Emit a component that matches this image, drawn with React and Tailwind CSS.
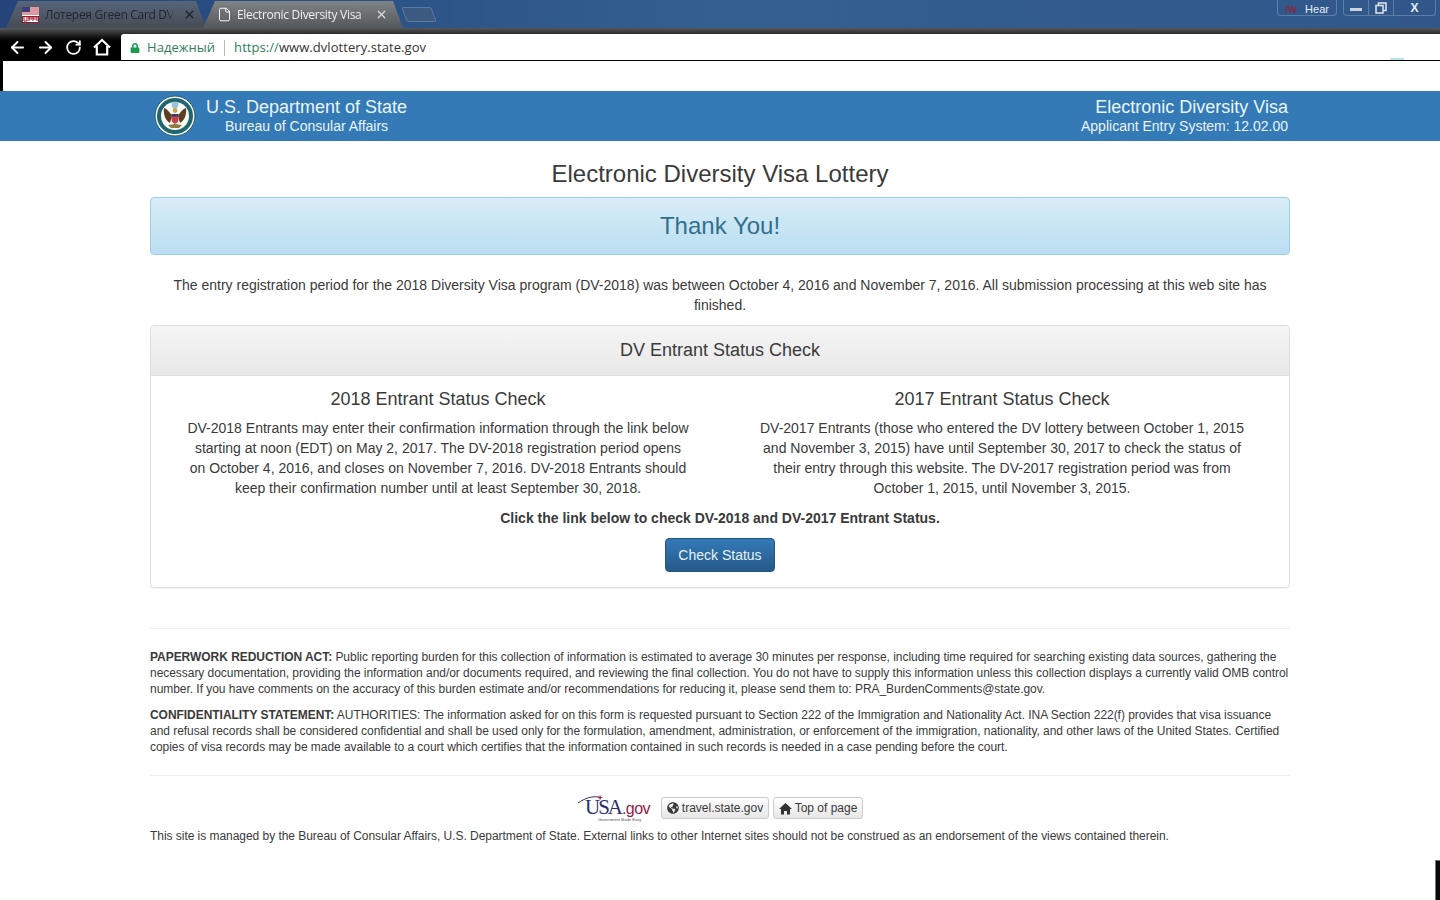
import { ArrowLeft, ArrowRight, RotateCw, File, X } from "lucide-react";
import { FaGlobeAmericas, FaLock } from "react-icons/fa";

const FlagIcon = () => (
  <svg width="17" height="16" viewBox="0 0 17 16" className="shrink-0">
    <rect width="17" height="9" fill="#fff" />
    <path d="M0 1h17M0 3h17M0 5h17M0 7h17" stroke="#c03040" strokeWidth="1" />
    <rect width="8" height="5" fill="#3a3f78" />
    <rect y="9" width="17" height="7" fill="#a01828" />
    <rect x="1" y="10" width="15" height="5" fill="#fff" />
    <path d="M2 10v4h3v-4M7 10v2h3v-2H7v4M11 10h4v4M11 12h4M11 10v4" fill="none" stroke="#a01828" strokeWidth="1" />
  </svg>
);

// the department seal, drawn small
const Seal = () => (
  <svg width="42" height="42" viewBox="0 0 42 42" className="shrink-0">
    <circle cx="21" cy="21" r="20" fill="#f4f6f4" stroke="#2d5f6a" strokeWidth="1" />
    <circle cx="21" cy="21" r="18" fill="#1f6670" />
    <circle cx="21" cy="21" r="14" fill="#fafaf5" />
    <circle cx="21" cy="10" r="3.4" fill="#9cc4d8" />
    <path d="M10 13c3 1 6 4 8 8l-2 7c-4-2-7-8-6-15zM32 13c-3 1-6 4-8 8l2 7c4-2 7-8 6-15z" fill="#5c3f22" />
    <circle cx="21" cy="15.5" r="2.4" fill="#c9a24a" />
    <path d="M17.5 19h7v6c0 2-2 3-3.500 4-1.500-1-3.500-2-3.500-4z" fill="#c8404a" />
    <path d="M17.500 19h7v2.500h-7z" fill="#33406e" />
    <path d="M14 30l7-1 7 1-3 3h-8z" fill="#8d7a3c" />
  </svg>
);

const OutlineHome = () => (
  <svg width="18" height="18" viewBox="0 0 18 18" fill="none" stroke="white" strokeWidth="2.200" className="ml-[2px]">
    <path d="M1 9.500 9 2l8 7.500" />
    <path d="M3.800 8v8.500h10.400V8" />
  </svg>
);

const SolidHome = () => (
  <svg width="13" height="13" viewBox="0 0 13 13" fill="#333" className="shrink-0">
    <path d="M6.500 1 13 7h-2v5.500H8V9H5v3.500H2V7H0z" />
  </svg>
);

const ChromeTab = ({ active, icon, title, className, closeColor }) => (
  <div
    className={`flex items-center h-[27px] w-[200px] -mr-[3px] text-[12px] tracking-[-0.3px] [clip-path:polygon(0_100%,6%_0,95%_0,100%_100%)] ${className} ${
      active ? "bg-gradient-to-b from-[#7f8487] to-[#55585b] text-[#eef0f1]" : "bg-gradient-to-b from-[#56657a] to-[#474c55] text-[#1f2430]"
    }`}
  >
    {icon}
    <span className="w-[130px] overflow-hidden whitespace-nowrap [mask-image:linear-gradient(to_right,black_94%,transparent)]">
      {title}
    </span>
    <X size={13} strokeWidth={2.500} className={`ml-auto ${closeColor}`} />
  </div>
);

const WinButton = ({ children, className }) => (
  <div className={`h-[16px] flex items-center justify-center border border-t-0 border-[#5b7fa8] text-[#e6edf5] ${className}`}>
    {children}
  </div>
);

const BrowserBar = () => (
  <div className="font-['Open_Sans',sans-serif]">
    {/* tab strip */}
    <div className="h-[28px] flex items-end pl-[6px] bg-gradient-to-r from-[#24447a] via-[#34608f] to-[#31578a]">
      <ChromeTab
        icon={<span className="mr-[6px]"><FlagIcon /></span>}
        title="Лотерея Green Card DV"
        className="pl-[16px] pr-[10px]"
        closeColor="text-[#20242c]"
      />
      <ChromeTab
        active
        icon={<File size={15} strokeWidth={1.500} className="shrink-0 text-white mr-[5px]" />}
        title="Electronic Diversity Visa"
        className="pl-[14px] pr-[15px]"
        closeColor="text-[#d8dadb]"
      />
      <div className="h-[15px] w-[30px] ml-[4px] mb-[6px] bg-[#3d5a80] border border-[#587ba3] rounded-[2px] [transform:skewX(20deg)]" />
      <div className="ml-auto flex self-start mr-[4px]">
        <WinButton className="w-[60px] rounded-b-[4px] mr-[6px] pt-[3px] text-[11px] font-['Liberation_Sans',sans-serif] gap-[8px]">
          <svg width="12" height="11" viewBox="0 0 12 11" fill="none" stroke="#7c3048" strokeWidth="1.500">
            <path d="M1 9c0-4 1-7 2-7s1 6 2 6 1-6 2-6 1 7 2 7 1-4 2-6" />
          </svg>
          Hear
        </WinButton>
        <WinButton className="w-[26px] rounded-bl-[4px]">
          <div className="w-[12px] h-[3px] bg-[#c9d3de] mt-[4px]" />
        </WinButton>
        <WinButton className="w-[25px] border-l-0">
          <svg width="12" height="12" viewBox="0 0 12 12" fill="none" stroke="#dfe6ee" strokeWidth="1.500">
            <rect x="1" y="3.500" width="7" height="7.500" />
            <path d="M3.500 3V1H11v7.500H8.500" />
          </svg>
        </WinButton>
        <WinButton className="w-[42px] border-l-0 rounded-br-[4px] text-[12px] font-bold font-['Liberation_Sans',sans-serif]">
          X
        </WinButton>
      </div>
    </div>

    {/* toolbar */}
    <div className="h-[33px] flex items-stretch bg-gradient-to-b from-[#585858] via-[#000] to-[#000] border-b border-black">
      <div className="w-[121px] shrink-0 flex items-center pl-[8px] gap-[9px] text-white pt-[6px]">
        <ArrowLeft size={19} strokeWidth={2.500} />
        <ArrowRight size={19} strokeWidth={2.500} />
        <RotateCw size={17} strokeWidth={2.500} className="ml-[1px]" />
        <OutlineHome />
      </div>
      <div className="flex-1 mt-[6px] pt-[1px] bg-white rounded-tl-[3px] flex items-center text-[13px] tracking-[0.06px] pl-[9px]">
        <FaLock size={10} className="text-[#1a9a50]" />
        <span className="ml-[7px] text-[#2f7d5b]">Надежный</span>
        <span className="mx-[9px] h-[16px] w-px bg-[#bbbbbb]" />
        <span className="text-[#2f7d5b]">https://</span>
        <span className="text-[#333]">www.dvlottery.state.gov</span>
      </div>
    </div>

    {/* leftover strip from the browser */}
    <div className="h-[30px] bg-white border-l-[3px] border-black" />
  </div>
);

const SiteHeader = () => (
  <div className="h-[50px] bg-[#337ab7] text-[#eaf5fb]">
    <div className="w-[1140px] mx-auto pl-[4px] pr-[2px] flex items-center justify-between h-full">
      <div className="flex items-center">
        <Seal />
        <div className="ml-[10px] text-center">
          <div className="text-[18px] leading-[20px]">U.S. Department of State</div>
          <div className="text-[14px] leading-[18px]">Bureau of Consular Affairs</div>
        </div>
      </div>
      <div className="text-right">
        <div className="text-[18px] leading-[20px]">Electronic Diversity Visa</div>
        <div className="text-[14px] leading-[18px]">Applicant Entry System: 12.02.00</div>
      </div>
    </div>
  </div>
);

const StatusColumn = ({ title, children }) => (
  <div className="w-[504px] text-center">
    <h3 className="text-[18px] leading-[20px] mb-[9px]">{title}</h3>
    <p className="text-[14px] leading-[20px]">{children}</p>
  </div>
);

const StatusPanel = () => (
  <div className="mt-[10px] border border-[#dddddd] rounded-[4px] shadow-[0_1px_1px_rgba(0,0,0,0.05)]">
    <div className="h-[50px] flex items-center justify-center text-[18px] border-b border-[#dddddd] bg-gradient-to-b from-[#f5f5f5] to-[#e8e8e8] rounded-t-[3px]">
      DV Entrant Status Check
    </div>
    <div className="pt-[13px] pb-[15px]">
      <div className="flex gap-[60px] px-[35px]">
        <StatusColumn title="2018 Entrant Status Check">
          DV-2018 Entrants may enter their confirmation information through the link below starting at noon (EDT) on May
          2, 2017. The DV-2018 registration period opens on October 4, 2016, and closes on November 7, 2016. DV-2018
          Entrants should keep their confirmation number until at least September 30, 2018.
        </StatusColumn>
        <StatusColumn title="2017 Entrant Status Check">
          DV-2017 Entrants (those who entered the DV lottery between October 1, 2015 and November 3, 2015) have until
          September 30, 2017 to check the status of their entry through this website. The DV-2017 registration period
          was from October 1, 2015, until November 3, 2015.
        </StatusColumn>
      </div>
      <p className="mt-[10px] text-center font-bold text-[14px] leading-[20px]">
        Click the link below to check DV-2018 and DV-2017 Entrant Status.
      </p>
      <div className="mt-[10px] flex justify-center">
        <button className="w-[110px] h-[34px] text-[14px] text-[#e6f2fa] rounded-[4px] border border-[#245580] bg-gradient-to-b from-[#337ab7] to-[#265a88]">
          Check Status
        </button>
      </div>
    </div>
  </div>
);

const UsaGovLogo = () => (
  <div className="relative w-[80px] h-[24px] pl-[8px] whitespace-nowrap leading-[22px] font-['Liberation_Serif',serif] text-[21px] tracking-[-2px] text-[#2b2f6b]">
    USA
    <span className="ml-[1px] font-['Liberation_Sans',sans-serif] text-[16px] tracking-[-0.600px] text-[#8f2347]">.gov</span>
    {/* swoosh and star over the U */}
    <svg width="30" height="12" viewBox="0 0 30 12" className="absolute left-0 -top-[2px]" fill="none">
      <path d="M1 9C8 4 15 2 22 3" stroke="#2b2f6b" strokeWidth="1" />
      <path d="M23 1l1 2 2 .5-2 .8-1 2-.8-2-2-.8 2-.5z" fill="#b02048" />
    </svg>
    <span className="absolute left-[21px] top-[22px] text-[4px] leading-[4px] tracking-normal font-['Liberation_Sans',sans-serif] text-[#555]">
      Government Made Easy
    </span>
  </div>
);

const Footer = () => (
  <>
    <div className="mt-[40px] border-t border-[#eeeeee] pt-[20px] text-[12px] leading-[16px] tracking-[-0.042px]">
      <p>
        <b>PAPERWORK REDUCTION ACT:</b> Public reporting burden for this collection of information is estimated to
        average 30 minutes per response, including time required for searching existing data sources, gathering the
        necessary documentation, providing the information and/or documents required, and reviewing the final
        collection. You do not have to supply this information unless this collection displays a currently valid OMB
        control number. If you have comments on the accuracy of this burden estimate and/or recommendations for
        reducing it, please send them to: PRA_BurdenComments@state.gov.
      </p>
      <p className="mt-[10px]">
        <b>CONFIDENTIALITY STATEMENT:</b> AUTHORITIES: The information asked for on this form is requested pursuant to
        Section 222 of the Immigration and Nationality Act. INA Section 222(f) provides that visa issuance and refusal
        records shall be considered confidential and shall be used only for the formulation, amendment, administration,
        or enforcement of the immigration, nationality, and other laws of the United States. Certified copies of visa
        records may be made available to a court which certifies that the information contained in such records is
        needed in a case pending before the court.
      </p>
    </div>
    <div className="mt-[20px] border-t border-[#eeeeee] pt-[20px] flex justify-center items-center gap-[4px] text-[12px]">
      <UsaGovLogo />
      <div className="h-[22px] w-[108px] flex items-center justify-center gap-[3px] border border-[#cccccc] rounded-[3px] bg-gradient-to-b from-white to-[#e6e6e6]">
        <FaGlobeAmericas size={12} /> travel.state.gov
      </div>
      <div className="h-[22px] w-[90px] flex items-center justify-center gap-[3px] border border-[#cccccc] rounded-[3px] bg-gradient-to-b from-white to-[#e6e6e6]">
        <SolidHome /> Top of page
      </div>
    </div>
    <p className="mt-[8px] text-[12px] leading-[16px] tracking-[-0.042px]">
      This site is managed by the Bureau of Consular Affairs, U.S. Department of State. External links to other Internet
      sites should not be construed as an endorsement of the views contained therein.
    </p>
  </>
);

export default function App() {
  return (
    <div className="relative min-h-[900px] bg-white font-['Liberation_Sans',Arial,sans-serif] text-[#3a3a3a]">
      <BrowserBar />
      <SiteHeader />
      <div className="w-[1140px] mx-auto">
        <h2 className="mt-[20px] text-[24px] leading-[26px] text-center">Electronic Diversity Visa Lottery</h2>
        <div className="mt-[10px] h-[58px] flex items-center justify-center text-[24px] text-[#31708f] border border-[#9acfea] rounded-[4px] bg-gradient-to-b from-[#d9edf7] to-[#b9def0]">
          Thank You!
        </div>
        <p className="mt-[20px] px-[20px] text-center text-[14px] leading-[20px]">
          The entry registration period for the 2018 Diversity Visa program (DV-2018) was between October 4, 2016 and
          November 7, 2016. All submission processing at this web site has finished.
        </p>
        <StatusPanel />
        <Footer />
      </div>
      {/* stray bits of other windows that show over the page */}
      <div className="absolute left-[1390px] top-[58px] w-[14px] h-[2px] bg-[#b5e6ea]" />
      <div className="absolute right-0 top-[860px] w-[5px] h-[40px] bg-[#0a0a0a] border-l border-t border-[#777777]" />
    </div>
  );
}
